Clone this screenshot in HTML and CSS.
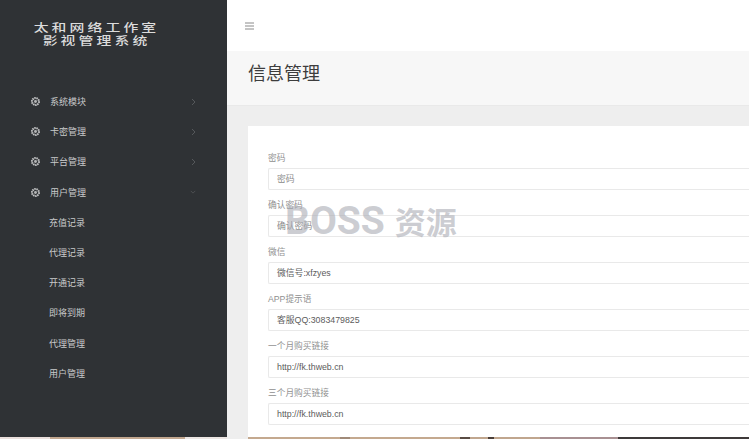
FILE: index.html
```html
<!DOCTYPE html>
<html lang="zh">
<head>
<meta charset="utf-8">
<title>信息管理</title>
<link rel="stylesheet" href="styles.css">
</head>
<body>
<div class="app">
  <aside class="sidebar">
    <div class="brand"><div>太和网络工作室</div><div>影视管理系统</div></div>
    <nav class="menu">
      <a class="item"><svg class="ico" viewBox="0 0 12 12"><circle cx="6" cy="6" r="3.8" fill="none" stroke="#c4c5c6" stroke-width="2.2" stroke-dasharray="1.6 .7"/><circle cx="6" cy="6" r="1.6" fill="#b5b6b7"/></svg><span class="label">系统模块</span><svg class="chev" viewBox="0 0 6 8"><path d="M2 1l3 3-3 3" fill="none" stroke="#55585b"/></svg></a>
      <a class="item"><svg class="ico" viewBox="0 0 12 12"><circle cx="6" cy="6" r="3.8" fill="none" stroke="#c4c5c6" stroke-width="2.2" stroke-dasharray="1.6 .7"/><circle cx="6" cy="6" r="1.6" fill="#b5b6b7"/></svg><span class="label">卡密管理</span><svg class="chev" viewBox="0 0 6 8"><path d="M2 1l3 3-3 3" fill="none" stroke="#55585b"/></svg></a>
      <a class="item"><svg class="ico" viewBox="0 0 12 12"><circle cx="6" cy="6" r="3.8" fill="none" stroke="#c4c5c6" stroke-width="2.2" stroke-dasharray="1.6 .7"/><circle cx="6" cy="6" r="1.6" fill="#b5b6b7"/></svg><span class="label">平台管理</span><svg class="chev" viewBox="0 0 6 8"><path d="M2 1l3 3-3 3" fill="none" stroke="#55585b"/></svg></a>
      <a class="item"><svg class="ico" viewBox="0 0 12 12"><circle cx="6" cy="6" r="3.8" fill="none" stroke="#c4c5c6" stroke-width="2.2" stroke-dasharray="1.6 .7"/><circle cx="6" cy="6" r="1.6" fill="#b5b6b7"/></svg><span class="label">用户管理</span><svg class="chev" viewBox="0 0 8 6"><path d="M1 1.5l3 3 3-3" fill="none" stroke="#55585b"/></svg></a>
      <a class="sub">充值记录</a>
      <a class="sub">代理记录</a>
      <a class="sub">开通记录</a>
      <a class="sub">即将到期</a>
      <a class="sub">代理管理</a>
      <a class="sub">用户管理</a>
    </nav>
  </aside>
  <main class="main">
    <header class="topbar"><svg class="burger" viewBox="0 0 9 8"><path d="M0 1h9M0 4h9M0 7h9" stroke="#8a8a8a" stroke-width="1"/></svg></header>
    <div class="pagehead"><h1>信息管理</h1></div>
    <div class="content">
      <form class="card">
        <div class="field"><div class="lbl">密码</div><div class="input ph">密码</div></div>
        <div class="field"><div class="lbl">确认密码</div><div class="input ph">确认密码</div></div>
        <div class="field"><div class="lbl">微信</div><div class="input">微信号:xfzyes</div></div>
        <div class="field"><div class="lbl">APP提示语</div><div class="input">客服QQ:3083479825</div></div>
        <div class="field"><div class="lbl">一个月购买链接</div><div class="input">http://fk.thweb.cn</div></div>
        <div class="field"><div class="lbl">三个月购买链接</div><div class="input">http://fk.thweb.cn</div></div>
      </form>
    </div>
  </main>
</div>
<div class="strip"></div>
<div class="watermark"><span class="wm-latin">BOSS</span><span class="wm-cjk">资源</span></div>
</body>
</html>
```
FILE: styles.css
```css
html, body { margin: 0; padding: 0; }
body {
  width: 749px; height: 439px; overflow: hidden; position: relative;
  font-family: "Liberation Sans", "Noto Sans CJK SC", sans-serif;
  background: #fff;
}
.app { display: flex; height: 436.5px; }
.sidebar { width: 227px; flex: none; background: #2f3235; color: #c9cacb; }
.brand {
  width: 193px; padding-top: 21px; height: 65.5px; text-align: center;
  font-family: "Noto Sans CJK SC", serif;
  font-size: 11px; line-height: 13px; letter-spacing: 2.3px; color: #dcdcdc; font-weight: 500;
  transform: scaleX(1.35);
}
.menu { display: flex; flex-direction: column; }
.item, .sub { height: 30.2px; display: flex; align-items: center; font-size: 9px; }
.item { padding-left: 30px; }
.ico { width: 11px; height: 11px; flex: none; }
.label { margin-left: 9px; width: 140px; }
.chev { width: 6px; height: 8px; }
.sub { padding-left: 49px; }
.main { flex: 1; min-width: 0; display: flex; flex-direction: column; background: #eeeeee; }
.topbar { height: 51px; flex: none; background: #fff; display: flex; align-items: center; padding-left: 18px; }
.burger { width: 9px; height: 8px; }
.pagehead { height: 55px; flex: none; background: #f7f7f7; border-bottom: 1px solid #e9e9e9; display: flex; align-items: center; padding-left: 21px; padding-bottom: 9px; box-sizing: border-box; }
h1 { margin: 0; font-size: 18px; font-weight: 400; color: #3d3d3d; line-height: 24px; }
.content { flex: 1; padding: 20px 0 0 21px; min-height: 0; }
.card { background: #fff; height: 100%; padding: 26px 0 0 20px; box-sizing: border-box; }
.field { height: 47px; }
.lbl { font-size: 8.7px; line-height: 13px; color: #8f8f8f; height: 16px; }
.input { height: 22px; box-sizing: border-box; border: 1px solid #e9e9e9; border-right: 0; border-radius: 2px 0 0 2px; padding-left: 8px; font-size: 8.8px; line-height: 20px; color: #5c5c5c; }
.ph { color: #8a8a8a; }
.strip { height: 2.5px; background: linear-gradient(90deg, #eadfdc 0 50px, #c2a78f 50px 185px, #ece6e3 185px 227px, #eeeeee 227px 248px, #c4a98f 248px 340px, #a08a78 340px 350px, #c4a98f 350px 460px, #5a4c44 460px 470px, #c0a68e 470px 488px, #4a3e38 488px 494px, #c0a68e 494px 540px, #a89092 540px 618px, #3e3a3a 618px 749px); }
.watermark {
  position: absolute; left: 285px; top: 199px; display: flex; align-items: baseline; gap: 10px;
  line-height: 44px; font-weight: 700; color: rgba(170,172,180,.6); white-space: nowrap;
}
.wm-latin { font-family: Roboto, "Liberation Sans", sans-serif; font-size: 39px; }
.wm-cjk { font-family: "Noto Sans CJK SC", sans-serif; font-size: 31px; }
```
